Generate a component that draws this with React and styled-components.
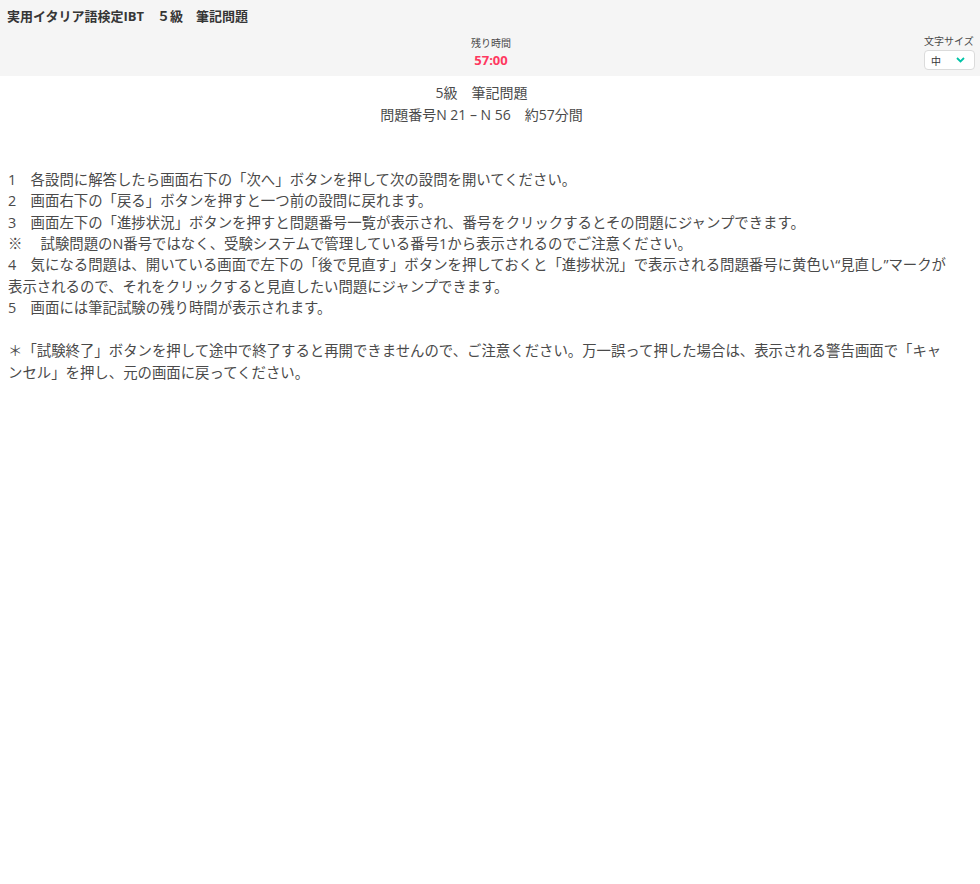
import React from 'react';
import styled, { createGlobalStyle } from 'styled-components';

const GlobalStyle = createGlobalStyle`
  html, body {
    margin: 0;
    padding: 0;
    background: #fff;
  }
  body {
    font-family: "Open Sans", "Noto Sans CJK JP", sans-serif;
    color: #4a4a4a;
  }
`;

const Header = styled.header`
  background: #f5f5f5;
  padding: 8px 5px 6px 7px;
`;

const Title = styled.h1`
  margin: 0;
  font-size: 13px;
  line-height: 17px;
  font-weight: 700;
  color: #363636;
`;

const ControlRow = styled.div`
  display: grid;
  grid-template-columns: 1fr auto 1fr;
  align-items: start;
  margin-top: 11px;
`;

const Timer = styled.div`
  grid-column: 2;
  display: flex;
  flex-direction: column;
  align-items: center;
`;

const SmallLabel = styled.div`
  font-size: 10px;
  line-height: 14px;
  color: #4a4a4a;
`;

const TimeValue = styled.div`
  font-size: 13px;
  line-height: 20px;
  font-weight: 700;
  color: #ff3860;
`;

const SizeControl = styled.div`
  grid-column: 3;
  justify-self: end;
  display: flex;
  flex-direction: column;
  margin-top: -2px;
`;

const SelectBox = styled.div`
  width: 51px;
  height: 20px;
  box-sizing: border-box;
  margin-top: 2px;
  background: #fff;
  border: 1px solid #dbdbdb;
  border-radius: 4px;
  display: flex;
  align-items: center;
  justify-content: space-between;
  padding: 0 9px 0 6px;
  font-size: 10px;
  color: #363636;
`;

const Main = styled.main`
  padding: 6px 28px 0 8px;
`;

const Heading = styled.div`
  text-align: center;
  font-size: 14px;
  line-height: 22px;
  padding-left: 3px;
`;

const Instructions = styled.div`
  margin-top: 43px;
  font-size: 14.4px;
  line-height: 21.33px;
`;

const Line = styled.p`
  margin: 0;
`;

const Notice = styled.p`
  margin: 22px 0 0;
  font-size: 14.4px;
  line-height: 22px;
`;

function Chevron() {
  return (
    <svg width="9" height="6" viewBox="0 0 9 6" aria-hidden="true">
      <path d="M1 1l3.5 3.5L8 1" fill="none" stroke="#00c4a7" strokeWidth="1.8" />
    </svg>
  );
}

const lines = [
  '1　各設問に解答したら画面右下の「次へ」ボタンを押して次の設問を開いてください。',
  '2　画面右下の「戻る」ボタンを押すと一つ前の設問に戻れます。',
  '3　画面左下の「進捗状況」ボタンを押すと問題番号一覧が表示され、番号をクリックするとその問題にジャンプできます。',
  '※　 試験問題のN番号ではなく、受験システムで管理している番号1から表示されるのでご注意ください。',
  '4　気になる問題は、開いている画面で左下の「後で見直す」ボタンを押しておくと「進捗状況」で表示される問題番号に黄色い“見直し”マークが表示されるので、それをクリックすると見直したい問題にジャンプできます。',
  '5　画面には筆記試験の残り時間が表示されます。',
];

export default function App() {
  return (
    <>
      <GlobalStyle />
      <Header>
        <Title>実用イタリア語検定IBT　５級　筆記問題</Title>
        <ControlRow>
          <Timer>
            <SmallLabel>残り時間</SmallLabel>
            <TimeValue>57:00</TimeValue>
          </Timer>
          <SizeControl>
            <SmallLabel>文字サイズ</SmallLabel>
            <SelectBox>
              <span>中</span>
              <Chevron />
            </SelectBox>
          </SizeControl>
        </ControlRow>
      </Header>
      <Main>
        <Heading>5級　筆記問題</Heading>
        <Heading>問題番号N 21 – N 56　約57分間</Heading>
        <Instructions>
          {lines.map((text) => (
            <Line key={text}>{text}</Line>
          ))}
        </Instructions>
        <Notice>
          ＊「試験終了」ボタンを押して途中で終了すると再開できませんので、ご注意ください。万一誤って押した場合は、表示される警告画面で「キャンセル」を押し、元の画面に戻ってください。
        </Notice>
      </Main>
    </>
  );
}
